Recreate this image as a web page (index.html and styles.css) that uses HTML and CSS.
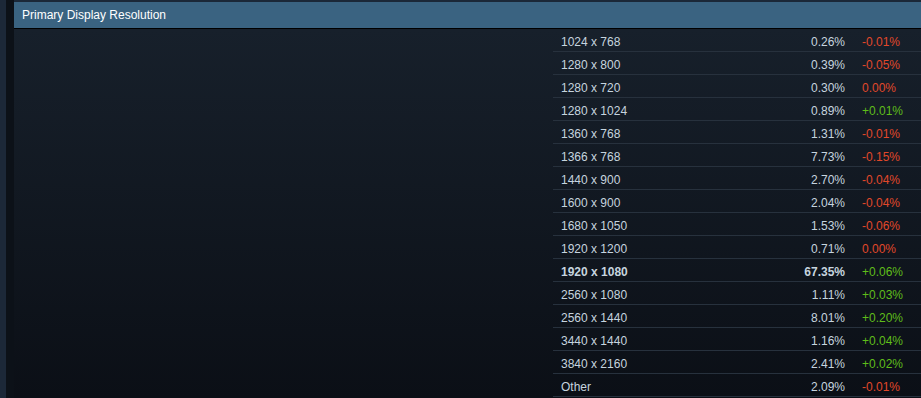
FILE: index.html
```html
<!DOCTYPE html>
<html>
<head>
<meta charset="utf-8">
<link rel="stylesheet" href="styles.css">
</head>
<body>
<div class="page">
  <div class="rail"></div>
  <div class="gutter"></div>
  <div class="main">
    <div class="header">Primary Display Resolution</div>
    <div class="body">
      <div class="spacer"></div>
      <div class="table">
        <div class="row"><span class="name">1024 x 768</span><span class="pct">0.26%</span><span class="chg neg">-0.01%</span></div>
        <div class="row"><span class="name">1280 x 800</span><span class="pct">0.39%</span><span class="chg neg">-0.05%</span></div>
        <div class="row"><span class="name">1280 x 720</span><span class="pct">0.30%</span><span class="chg neg">0.00%</span></div>
        <div class="row"><span class="name">1280 x 1024</span><span class="pct">0.89%</span><span class="chg pos">+0.01%</span></div>
        <div class="row"><span class="name">1360 x 768</span><span class="pct">1.31%</span><span class="chg neg">-0.01%</span></div>
        <div class="row"><span class="name">1366 x 768</span><span class="pct">7.73%</span><span class="chg neg">-0.15%</span></div>
        <div class="row"><span class="name">1440 x 900</span><span class="pct">2.70%</span><span class="chg neg">-0.04%</span></div>
        <div class="row"><span class="name">1600 x 900</span><span class="pct">2.04%</span><span class="chg neg">-0.04%</span></div>
        <div class="row"><span class="name">1680 x 1050</span><span class="pct">1.53%</span><span class="chg neg">-0.06%</span></div>
        <div class="row"><span class="name">1920 x 1200</span><span class="pct">0.71%</span><span class="chg neg">0.00%</span></div>
        <div class="row bold"><span class="name">1920 x 1080</span><span class="pct">67.35%</span><span class="chg pos">+0.06%</span></div>
        <div class="row"><span class="name">2560 x 1080</span><span class="pct">1.11%</span><span class="chg pos">+0.03%</span></div>
        <div class="row"><span class="name">2560 x 1440</span><span class="pct">8.01%</span><span class="chg pos">+0.20%</span></div>
        <div class="row"><span class="name">3440 x 1440</span><span class="pct">1.16%</span><span class="chg pos">+0.04%</span></div>
        <div class="row"><span class="name">3840 x 2160</span><span class="pct">2.41%</span><span class="chg pos">+0.02%</span></div>
        <div class="row"><span class="name">Other</span><span class="pct">2.09%</span><span class="chg neg">-0.01%</span></div>
      </div>
    </div>
  </div>
</div>
</body>
</html>
```
FILE: styles.css
```css
html, body {
  margin: 0;
  padding: 0;
  background: #0b0f15;
  overflow: hidden;
}
.page {
  display: flex;
  width: 921px;
  height: 398px;
  font-family: "Liberation Sans", Arial, sans-serif;
  font-size: 12px;
}
.rail {
  width: 6px;
  flex: none;
  background: #1c2838;
}
.gutter {
  width: 8px;
  flex: none;
  background: #0c1118;
}
.main {
  flex: 1;
  display: flex;
  flex-direction: column;
  background: #1b2838;
  padding-top: 2px;
  min-width: 0;
}
.header {
  height: 27px;
  flex: none;
  box-sizing: border-box;
  padding: 6px 0 0 8px;
  background: #3a6381;
  color: #ffffff;
  font-size: 12px;
  border-bottom: 1px solid #000000;
}
.body {
  flex: 1;
  display: flex;
  background: linear-gradient(to bottom, #17202b, #0b0f16);
}
.spacer {
  width: 539px;
  flex: none;
}
.table {
  flex: 1;
  display: flex;
  flex-direction: column;
}
.row {
  display: flex;
  height: 23px;
  box-sizing: border-box;
  border-bottom: 1px solid #27313d;
  align-items: center;
  color: #c6d4df;
  padding-top: 4px;
}
.row.bold {
  font-weight: bold;
}
.name {
  width: 228px;
  padding-left: 8px;
  flex: none;
}
.pct {
  width: 56px;
  text-align: right;
  flex: none;
}
.chg {
  padding-left: 17px;
  font-weight: normal;
}
.neg { color: #e0482a; }
.pos { color: #5fbd1a; }
```
